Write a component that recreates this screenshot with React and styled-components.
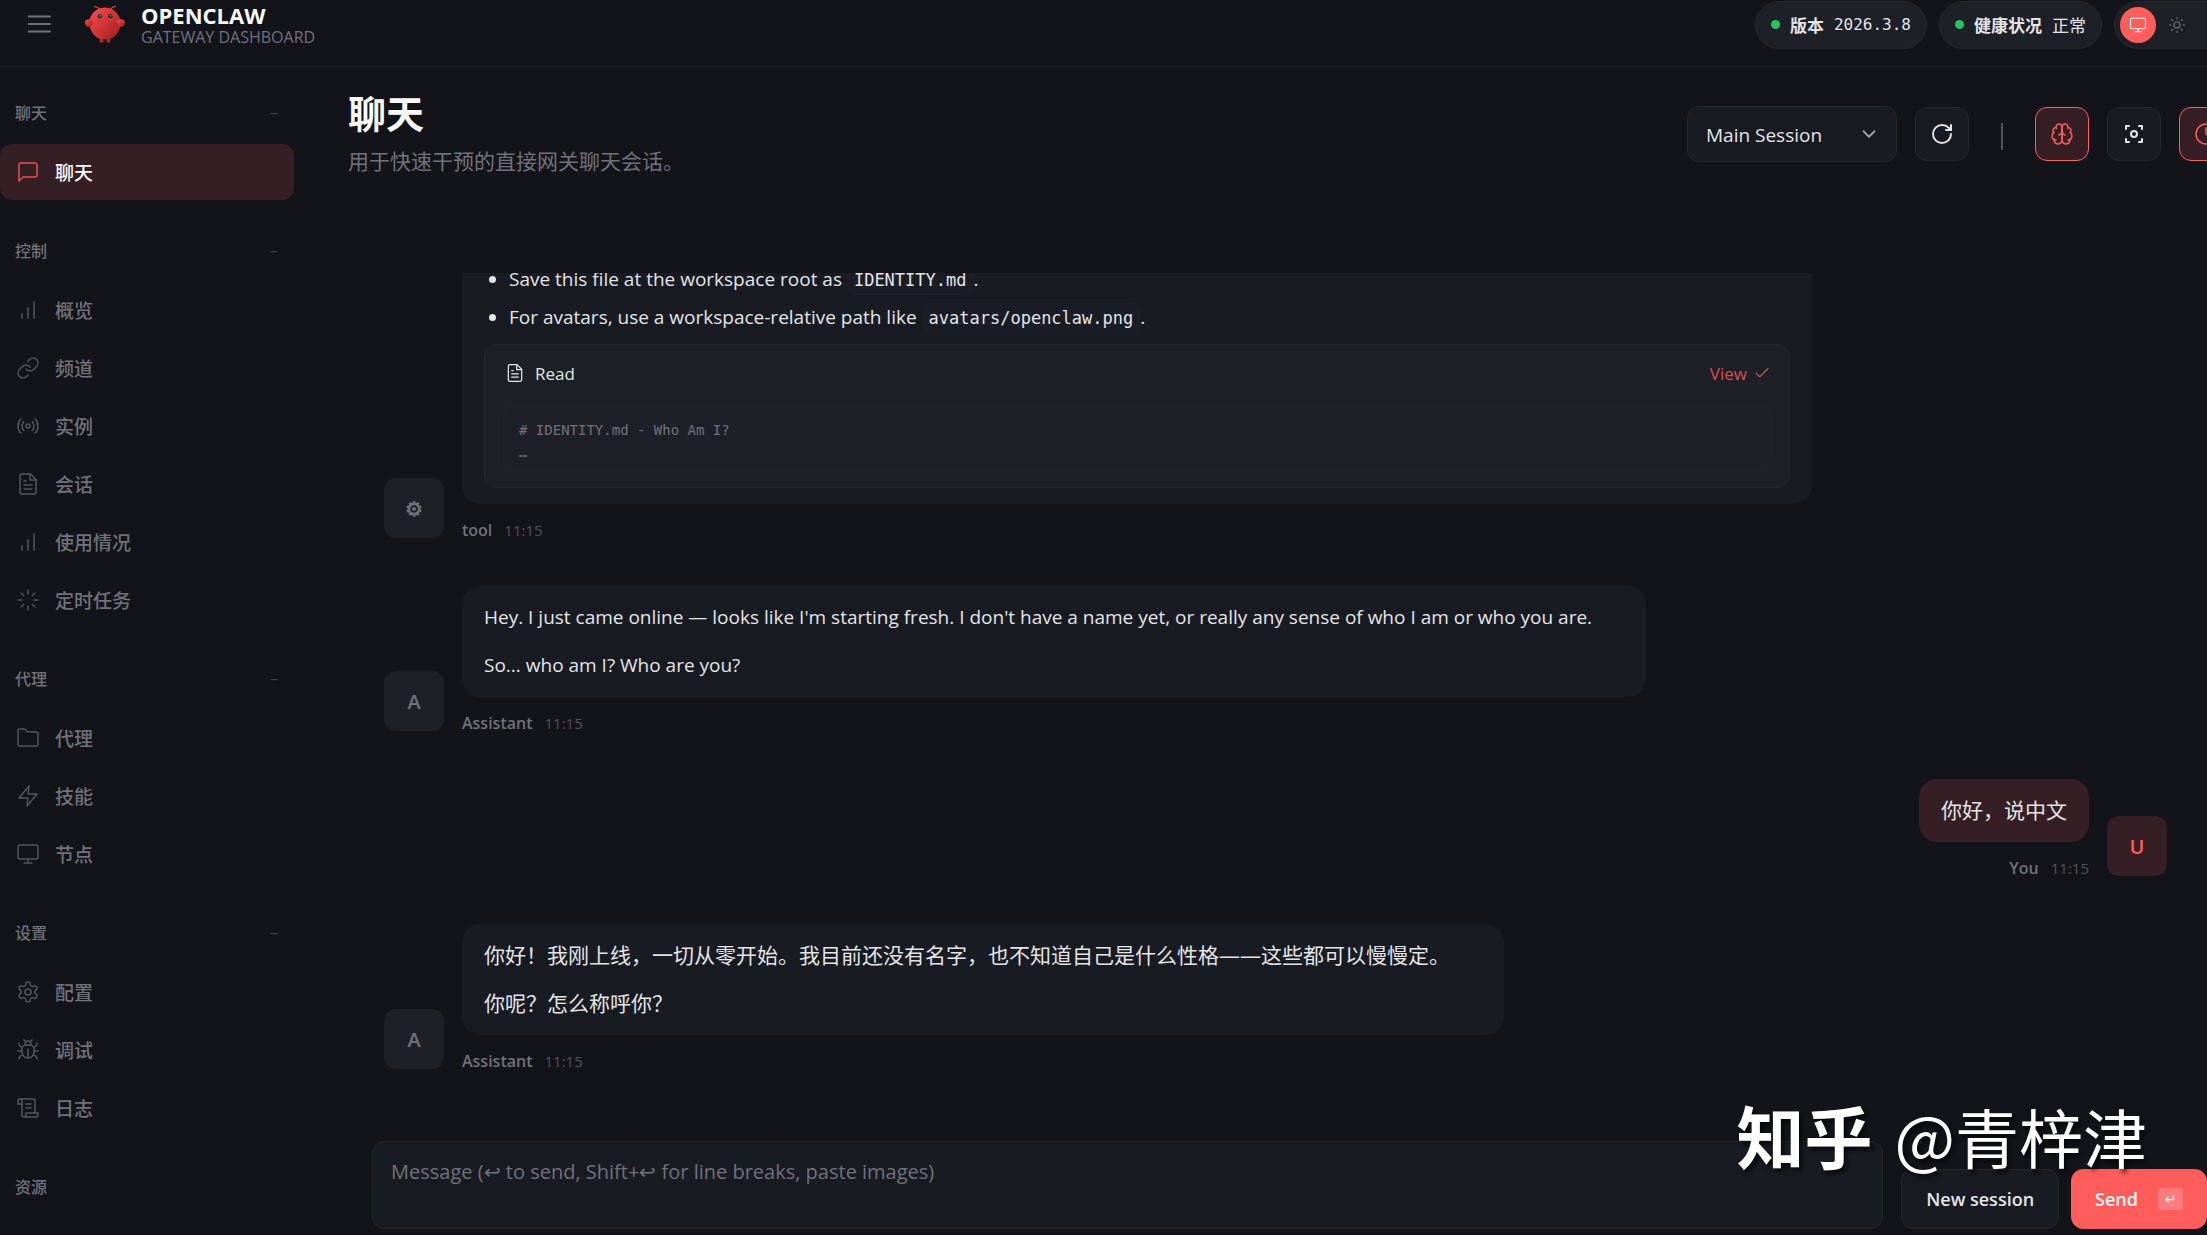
import React, { useState } from 'react';
import styled, { createGlobalStyle } from 'styled-components';

const GlobalStyle = createGlobalStyle`
    * {
        box-sizing: border-box;
    }
    body {
        margin: 0;
        background-color: #12141a;
        color: #e4e4e7;
        font-family: "Open Sans", "Noto Sans CJK SC", sans-serif;
        font-size: 20px;
        overflow: hidden;
    }
    button, select, textarea {
        font: inherit;
        color: inherit;
    }
`;

const mono = '"DejaVu Sans Mono", "Noto Sans CJK SC", monospace';

const Shell = styled.div`
    height: 100vh;
    display: flex;
    flex-direction: column;
    overflow: hidden;
`;

/* top bar */
const Topbar = styled.header`
    flex: none;
    height: 67px;
    padding: 1px 0 17px 24px;
    border-bottom: 1px solid #27272a;
    display: flex;
    align-items: center;
`;
const MenuButton = styled.button`
    width: 32px;
    height: 32px;
    padding: 0;
    border: none;
    background: none;
    color: #71717a;
    cursor: pointer;
`;
const Brand = styled.div`
    display: flex;
    align-items: center;
    gap: 15px;
    margin-left: 28px;
`;
const BrandText = styled.div`
    padding-top: 2px;
`;
const BrandName = styled.div`
    font-size: 22px;
    line-height: 22px;
    font-weight: 700;
    color: #fafafa;
`;
const BrandSub = styled.div`
    font-size: 16px;
    line-height: 22px;
    color: #71717a;
`;
/* the right-hand controls run past the window edge */
const Status = styled.div`
    display: flex;
    gap: 12px;
    margin-left: auto;
    margin-right: -33px;
`;
const Pill = styled.div`
    height: 48px;
    padding: 0 15px 2px;
    border: 1px solid #27272a;
    border-radius: 24px;
    background-color: #1e2028;
    display: flex;
    align-items: center;
    gap: 10px;
    font-size: 17px;
`;
const Dot = styled.span`
    width: 9px;
    height: 9px;
    border-radius: 50%;
    background-color: #22c55e;
`;
const PillValue = styled.span`
    font-family: ${({ $mono }) => ($mono ? mono : 'inherit')};
    font-size: ${({ $mono }) => ($mono ? '16px' : '17px')};
`;
const ThemeSwitch = styled.div`
    height: 48px;
    padding: 5px;
    border: 1px solid #27272a;
    border-radius: 24px;
    background-color: #1e2028;
    display: flex;
    gap: 3px;
`;
const ThemeButton = styled.button`
    width: 36px;
    height: 36px;
    padding: 0;
    border: none;
    border-radius: 50%;
    background-color: ${({ $active }) => ($active ? '#ff5c5c' : 'transparent')};
    color: ${({ $active }) => ($active ? '#fff' : '#71717a')};
    display: flex;
    align-items: center;
    justify-content: center;
    cursor: pointer;
`;

/* sidebar */
const Body = styled.div`
    flex: 1;
    min-height: 0;
    display: flex;
`;
const Sidebar = styled.nav`
    flex: none;
    width: 294px;
    padding-top: 25px;
    overflow: hidden;
    display: flex;
    flex-direction: column;
    gap: 30px;
`;
const Section = styled.section`
    flex: none;
    display: flex;
    flex-direction: column;
    gap: 2px;
`;
const SectionTitle = styled.button`
    height: 40px;
    margin-bottom: 10px;
    padding: 0 16px 0 15px;
    border: none;
    background: none;
    display: flex;
    align-items: center;
    justify-content: space-between;
    font-size: 16px;
    font-weight: 500;
    color: #71717a;
    cursor: pointer;
`;
const Collapse = styled.span`
    opacity: 0.5;
`;
const NavItem = styled.a`
    height: 56px;
    padding: 0 16px;
    border-radius: 12px;
    display: flex;
    align-items: center;
    gap: 15px;
    font-size: 19px;
    font-weight: 500;
    text-decoration: none;
    color: ${({ $active }) => ($active ? '#fafafa' : '#71717a')};
    background-color: ${({ $active }) => ($active ? '#361f24' : 'transparent')};

    svg {
        color: ${({ $active }) => ($active ? '#ff5c5c' : '#71717a')};
        opacity: ${({ $active }) => ($active ? 0.85 : 0.7)};
    }
`;

/* content */
const Main = styled.main`
    flex: 1;
    min-width: 0;
    padding: 22px 0 6px 54px;
    display: flex;
    flex-direction: column;
`;
const PageHead = styled.div`
    flex: none;
    height: 184px;
    display: flex;
    justify-content: space-between;
    align-items: flex-start;
`;
const Title = styled.h1`
    margin: 0;
    font-size: 38px;
    line-height: 48px;
    font-weight: 700;
    color: #fafafa;
`;
const Subtitle = styled.p`
    margin: 9px 0 0;
    font-size: 21px;
    line-height: 31px;
    color: #71717a;
`;
const Controls = styled.div`
    display: flex;
    align-items: center;
    gap: 18px;
    margin: 17px -26px 0 0;
`;
const SelectWrap = styled.label`
    display: grid;
    align-items: center;

    > * {
        grid-area: 1 / 1;
    }
    svg {
        justify-self: end;
        margin-right: 17px;
        color: #a1a1aa;
        pointer-events: none;
    }
`;
const SessionSelect = styled.select`
    width: 210px;
    height: 56px;
    padding: 2px 18px 0;
    border: 1px solid #27272a;
    border-radius: 12px;
    background-color: #181b22;
    appearance: none;
    font-size: 19px;
`;
const IconButton = styled.button`
    width: 54px;
    height: 54px;
    padding: 0;
    border: 1px solid ${({ $active }) => ($active ? '#ff5c5c' : '#27272a')};
    border-radius: 12px;
    background-color: ${({ $active }) => ($active ? '#361f24' : '#181b22')};
    color: ${({ $active }) => ($active ? '#ff5c5c' : '#e4e4e7')};
    display: flex;
    align-items: center;
    justify-content: center;
    cursor: pointer;
`;
const Divider = styled.span`
    width: 2px;
    height: 27px;
    margin: 4px 14px 0;
    background-color: #52525b;
`;

/* thread */
const Thread = styled.div`
    flex: 1;
    min-height: 0;
    padding: 0 40px 68px 36px;
    overflow: hidden;
    display: flex;
    flex-direction: column;
    justify-content: flex-end;
    gap: 44px;
`;
const Group = styled.div`
    flex: none;
    display: flex;
    flex-direction: ${({ $user }) => ($user ? 'row-reverse' : 'row')};
    align-items: flex-end;
    gap: 18px;
`;
const Avatar = styled.div`
    flex: none;
    width: 60px;
    height: 60px;
    margin-bottom: 4px;
    border-radius: 12px;
    background-color: ${({ $user }) => ($user ? '#361f24' : '#1e2028')};
    color: ${({ $user }) => ($user ? '#ff5c5c' : '#71717a')};
    display: flex;
    align-items: center;
    justify-content: center;
    font-weight: 600;
`;
const Column = styled.div`
    min-width: 0;
    display: flex;
    flex-direction: column;
    align-items: ${({ $user }) => ($user ? 'flex-end' : 'flex-start')};
`;
const Bubble = styled.div`
    padding: 16px 54px 16px 22px;
    border-radius: 18px;
    background-color: #181b22;
    display: flex;
    flex-direction: column;
    gap: 17px;
    font-size: 19px;
    line-height: 31px;

    p {
        margin: 0;
    }
    &:lang(zh) {
        font-size: 21px;
    }
`;
const UserBubble = styled(Bubble)`
    padding: 16px 22px;
    background-color: #361f24;
`;
const ToolBubble = styled(Bubble)`
    width: 1350px;
    max-width: 100%;
    padding: 16px 22px;
    gap: 11px;
`;
const Rules = styled.ul`
    margin: 0;
    padding-left: 25px;

    li + li {
        margin-top: 7px;
    }
`;
const Code = styled.code`
    padding: 4px 6px;
    border: 1px solid #1e2028;
    border-radius: 8px;
    background-color: #1a1d25;
    font-family: ${mono};
    font-size: 17px;
    line-height: 20px;
`;
const ToolCard = styled.div`
    padding: 16px 18px;
    border: 1px solid #27272a;
    border-radius: 12px;
    background-color: #1e2028;
`;
const ToolHead = styled.div`
    display: flex;
    align-items: center;
    height: 24px;
    margin-bottom: 20px;
    padding-left: 2px;
    font-size: 17px;
    gap: 10px;
`;
const ViewButton = styled.button`
    margin-left: auto;
    padding: 0;
    border: none;
    background: none;
    color: #ff5c5c;
    opacity: 0.8;
    display: flex;
    align-items: center;
    gap: 6px;
    cursor: pointer;
`;
const Output = styled.pre`
    margin: 0;
    padding: 13px 15px 7px;
    border: 1px solid #23252c;
    border-radius: 12px;
    font-family: ${mono};
    font-size: 14px;
    line-height: 22px;
    color: #71717a;
`;
const Meta = styled.div`
    margin-top: 14px;
    line-height: 24px;
    font-size: 16px;
    display: flex;
    gap: 12px;
    color: #52525b;

    strong {
        font-weight: 600;
        color: #71717a;
    }
    time {
        font-size: 15px;
    }
`;

/* composer */
const Composer = styled.form`
    flex: none;
    padding-left: 24px;
    display: flex;
    align-items: flex-end;
    gap: 12px;
`;
const MessageBox = styled.textarea`
    flex: 1;
    min-width: 0;
    height: 88px;
    margin-right: 6px;
    padding: 15px 18px;
    border: 1px solid #27272a;
    border-radius: 12px;
    background-color: #181b22;
    resize: none;
    line-height: 30px;

    &::placeholder {
        color: #71717a;
        opacity: 1;
    }
`;
const NewButton = styled.button`
    height: 60px;
    padding: 0 24px;
    border: 1px solid #27272a;
    border-radius: 12px;
    background-color: #181b22;
    font-size: 18px;
    font-weight: 600;
    cursor: pointer;
`;
const SendButton = styled(NewButton)`
    padding: 0 23px;
    border-color: #ff5c5c;
    background-color: #ff5c5c;
    color: #fff;
    display: flex;
    align-items: center;
    gap: 20px;
`;
const Key = styled.kbd`
    width: 25px;
    height: 22px;
    border-radius: 4px;
    background-color: rgba(255, 255, 255, 0.2);
    display: flex;
    align-items: center;
    justify-content: center;
    font-family: "DejaVu Sans", sans-serif;
    font-size: 14px;
    font-weight: 400;
`;

const Watermark = styled.div`
    position: absolute;
    right: 60px;
    bottom: 55px;
    display: flex;
    align-items: center;
    gap: 22px;
    font-family: "Noto Sans CJK SC", sans-serif;
    font-size: 64px;
    line-height: 90px;
    color: #fff;
    text-shadow: 3px 4px 4px rgba(0, 0, 0, 0.6);
    pointer-events: none;

    strong {
        font-size: 68px;
        font-weight: 700;
    }
`;

const icons = {
    menu: <path d="M3 6h17M3 12h17M3 18h17" />,
    chat: <path d="M21 15a2 2 0 0 1-2 2H7l-4 4V5a2 2 0 0 1 2-2h14a2 2 0 0 1 2 2z" />,
    bars: <path d="M12 20V10M18 20V4M6 20v-4" />,
    link: (
        <>
            <path d="M10 13a5 5 0 0 0 7.54.54l3-3a5 5 0 0 0-7.07-7.07l-1.72 1.71" />
            <path d="M14 11a5 5 0 0 0-7.54-.54l-3 3a5 5 0 0 0 7.07 7.07l1.71-1.71" />
        </>
    ),
    radio: (
        <>
            <circle cx="12" cy="12" r="2" />
            <path d="M16.24 7.76a6 6 0 0 1 0 8.49M7.76 16.24a6 6 0 0 1 0-8.49M19.07 4.93a10 10 0 0 1 0 14.14M4.93 19.07a10 10 0 0 1 0-14.14" />
        </>
    ),
    file: (
        <>
            <path d="M14.5 2H6a2 2 0 0 0-2 2v16a2 2 0 0 0 2 2h12a2 2 0 0 0 2-2V7.5L14.5 2z" />
            <path d="M14 2v6h6M16 13H8M16 17H8M10 9H8" />
        </>
    ),
    loader: (
        <path d="M12 2v4M12 18v4M4.93 4.93l2.83 2.83M16.24 16.24l2.83 2.83M2 12h4M18 12h4M4.93 19.07l2.83-2.83M16.24 7.76l2.83-2.83" />
    ),
    folder: (
        <path d="M4 20h16a2 2 0 0 0 2-2V8a2 2 0 0 0-2-2h-7.93a2 2 0 0 1-1.66-.9l-.82-1.2A2 2 0 0 0 7.93 3H4a2 2 0 0 0-2 2v13c0 1.1.9 2 2 2Z" />
    ),
    zap: <path d="M13 2 3 14h9l-1 8 10-12h-9l1-8z" />,
    monitor: (
        <>
            <rect x="2" y="3" width="20" height="14" rx="2" />
            <path d="M8 21h8M12 17v4" />
        </>
    ),
    settings: (
        <>
            <path d="M12.22 2h-.44a2 2 0 0 0-2 2v.18a2 2 0 0 1-1 1.73l-.43.25a2 2 0 0 1-2 0l-.15-.08a2 2 0 0 0-2.73.73l-.22.38a2 2 0 0 0 .73 2.73l.15.1a2 2 0 0 1 1 1.72v.51a2 2 0 0 1-1 1.74l-.15.09a2 2 0 0 0-.73 2.73l.22.38a2 2 0 0 0 2.73.73l.15-.08a2 2 0 0 1 2 0l.43.25a2 2 0 0 1 1 1.73V20a2 2 0 0 0 2 2h.44a2 2 0 0 0 2-2v-.18a2 2 0 0 1 1-1.73l.43-.25a2 2 0 0 1 2 0l.15.08a2 2 0 0 0 2.73-.73l.22-.39a2 2 0 0 0-.73-2.73l-.15-.08a2 2 0 0 1-1-1.74v-.5a2 2 0 0 1 1-1.74l.15-.09a2 2 0 0 0 .73-2.73l-.22-.38a2 2 0 0 0-2.73-.73l-.15.08a2 2 0 0 1-2 0l-.43-.25a2 2 0 0 1-1-1.73V4a2 2 0 0 0-2-2z" />
            <circle cx="12" cy="12" r="3" />
        </>
    ),
    bug: (
        <>
            <path d="m8 2 1.88 1.88M14.12 3.88 16 2M9 7.13v-1a3.003 3.003 0 1 1 6 0v1" />
            <path d="M12 20c-3.3 0-6-2.7-6-6v-3a4 4 0 0 1 4-4h4a4 4 0 0 1 4 4v3c0 3.3-2.7 6-6 6M12 20v-9" />
            <path d="M6.53 9C4.6 8.8 3 7.1 3 5M6 13H2M3 21c0-2.1 1.7-3.9 3.8-4M20.97 5c0 2.1-1.6 3.8-3.5 4M22 13h-4M17.2 17c2.1.1 3.8 1.9 3.8 4" />
        </>
    ),
    scroll: (
        <>
            <path d="M8 21h12a2 2 0 0 0 2-2v-2H10v2a2 2 0 1 1-4 0V5a2 2 0 1 0-4 0v3h4" />
            <path d="M19 17V5a2 2 0 0 0-2-2H4M15 8h-5M15 12h-5" />
        </>
    ),
    sun: (
        <>
            <circle cx="12" cy="12" r="4" />
            <path d="M12 2v2M12 20v2M4.93 4.93l1.41 1.41M17.66 17.66l1.41 1.41M2 12h2M20 12h2M6.34 17.66l-1.41 1.41M19.07 4.93l-1.41 1.41" />
        </>
    ),
    moon: <path d="M12 3a6 6 0 0 0 9 9 9 9 0 1 1-9-9" />,
    down: <path d="m6 9 6 6 6-6" />,
    refresh: (
        <>
            <path d="M21 12a9 9 0 1 1-9-9c2.52 0 4.93 1 6.74 2.74L21 8" />
            <path d="M21 3v5h-5" />
        </>
    ),
    brain: (
        <>
            <path d="M12 5a3 3 0 1 0-5.997.125 4 4 0 0 0-2.526 5.77 4 4 0 0 0 .556 6.588A4 4 0 1 0 12 18Z" />
            <path d="M12 5a3 3 0 1 1 5.997.125 4 4 0 0 1 2.526 5.77 4 4 0 0 1-.556 6.588A4 4 0 1 1 12 18Z" />
            <path d="M15 13a4.5 4.5 0 0 1-3-4 4.5 4.5 0 0 1-3 4M17.599 6.5a3 3 0 0 0 .399-1.375M6.003 5.125A3 3 0 0 0 6.401 6.5" />
            <path d="M3.477 10.896a4 4 0 0 1 .585-.396M19.938 10.5a4 4 0 0 1 .585.396M6 18a4 4 0 0 1-1.967-.516M19.967 17.484A4 4 0 0 1 18 18" />
        </>
    ),
    focus: (
        <>
            <path d="M4 7V4h3M20 7V4h-3M4 17v3h3M20 17v3h-3" />
            <circle cx="12" cy="12" r="3" />
        </>
    ),
    clock: (
        <>
            <circle cx="12" cy="12" r="10" />
            <path d="M12 6v6l4 2" />
        </>
    ),
    check: <path d="M20 6 9 17l-5-5" />
};

const Icon = ({ name, size = 24, stroke = 1.5 }) => (
    <svg
        width={size}
        height={size}
        viewBox="0 0 24 24"
        fill="none"
        stroke="currentColor"
        strokeWidth={stroke}
        strokeLinecap="round"
        strokeLinejoin="round"
        aria-hidden="true"
    >
        {icons[name]}
    </svg>
);

const Logo = () => (
    <svg width="42" height="42" viewBox="0 0 120 120" aria-hidden="true">
        <defs>
            <linearGradient id="shell" x1="0" y1="0" x2="1" y2="1">
                <stop offset="0" stopColor="#ff4d4d" />
                <stop offset="1" stopColor="#991b1b" />
            </linearGradient>
        </defs>
        <g fill="url(#shell)">
            <path d="M60 10C30 10 15 35 15 55s15 40 30 45v10h10v-10s5 2 10 0v10h10v-10c15-5 30-25 30-45S90 10 60 10Z" />
            <path d="M20 45C5 40 0 50 5 60s15 5 20-5c3-7 0-10-5-10Z" />
            <path d="M100 45c15-5 20 5 15 15s-15 5-20-5c-3-7 0-10 5-10Z" />
        </g>
        <path
            d="M45 15Q35 5 30 8M75 15Q85 5 90 8"
            fill="none"
            stroke="#ff4d4d"
            strokeWidth="3"
            strokeLinecap="round"
        />
        <circle cx="45" cy="35" r="6" fill="#050810" />
        <circle cx="75" cy="35" r="6" fill="#050810" />
        <circle cx="46" cy="34" r="2.5" fill="#00e5cc" />
        <circle cx="76" cy="34" r="2.5" fill="#00e5cc" />
    </svg>
);

const sections = [
    { title: '聊天', items: [['chat', '聊天']] },
    {
        title: '控制',
        items: [
            ['bars', '概览'],
            ['link', '频道'],
            ['radio', '实例'],
            ['file', '会话'],
            ['bars', '使用情况'],
            ['loader', '定时任务']
        ]
    },
    {
        title: '代理',
        items: [
            ['folder', '代理'],
            ['zap', '技能'],
            ['monitor', '节点']
        ]
    },
    {
        title: '设置',
        items: [
            ['settings', '配置'],
            ['bug', '调试'],
            ['scroll', '日志']
        ]
    },
    { title: '资源', items: [] }
];

const Message = ({ user, avatar, name, children }) => (
    <Group $user={user}>
        <Avatar $user={user}>{avatar}</Avatar>
        <Column $user={user}>
            {children}
            <Meta>
                <strong>{name}</strong>
                <time>11:15</time>
            </Meta>
        </Column>
    </Group>
);

const App = () => {
    const [page, setPage] = useState('聊天');
    const [theme, setTheme] = useState('monitor');
    const [draft, setDraft] = useState('');

    return (
        <Shell>
            <GlobalStyle />
            <Topbar>
                <MenuButton aria-label="Menu">
                    <Icon name="menu" size={30} />
                </MenuButton>
                <Brand>
                    <Logo />
                    <BrandText>
                        <BrandName>OPENCLAW</BrandName>
                        <BrandSub>GATEWAY DASHBOARD</BrandSub>
                    </BrandText>
                </Brand>
                <Status>
                    <Pill>
                        <Dot />
                        <strong>版本</strong>
                        <PillValue $mono>2026.3.8</PillValue>
                    </Pill>
                    <Pill>
                        <Dot />
                        <strong>健康状况</strong>
                        <PillValue>正常</PillValue>
                    </Pill>
                    <ThemeSwitch>
                        {['monitor', 'sun', 'moon'].map((name) => (
                            <ThemeButton
                                key={name}
                                aria-label={name}
                                $active={theme === name}
                                onClick={() => setTheme(name)}
                            >
                                <Icon name={name} size={18} />
                            </ThemeButton>
                        ))}
                    </ThemeSwitch>
                </Status>
            </Topbar>
            <Body>
                <Sidebar>
                    {sections.map(({ title, items }) => (
                        <Section key={title}>
                            <SectionTitle>
                                {title}
                                {items.length > 0 && <Collapse>–</Collapse>}
                            </SectionTitle>
                            {items.map(([icon, label]) => (
                                <NavItem
                                    key={label}
                                    href="#"
                                    $active={page === label}
                                    onClick={() => setPage(label)}
                                >
                                    <Icon name={icon} />
                                    {label}
                                </NavItem>
                            ))}
                        </Section>
                    ))}
                </Sidebar>
                <Main>
                    <PageHead>
                        <div>
                            <Title>聊天</Title>
                            <Subtitle>用于快速干预的直接网关聊天会话。</Subtitle>
                        </div>
                        <Controls>
                            <SelectWrap>
                                <SessionSelect aria-label="Session">
                                    <option>Main Session</option>
                                </SessionSelect>
                                <Icon name="down" size={22} stroke={2} />
                            </SelectWrap>
                            <IconButton aria-label="Refresh">
                                <Icon name="refresh" stroke={2} />
                            </IconButton>
                            <Divider />
                            <IconButton $active aria-label="Thinking">
                                <Icon name="brain" />
                            </IconButton>
                            <IconButton aria-label="Focus">
                                <Icon name="focus" stroke={2} />
                            </IconButton>
                            <IconButton $active aria-label="Cron sessions">
                                <Icon name="clock" />
                            </IconButton>
                        </Controls>
                    </PageHead>
                    <Thread>
                        <Message avatar="⚙" name="tool">
                            <ToolBubble>
                                <Rules>
                                    <li>
                                        Save this file at the workspace root as{' '}
                                        <Code>IDENTITY.md</Code>.
                                    </li>
                                    <li>
                                        For avatars, use a workspace-relative path like{' '}
                                        <Code>avatars/openclaw.png</Code>.
                                    </li>
                                </Rules>
                                <ToolCard>
                                    <ToolHead>
                                        <Icon name="file" size={20} />
                                        Read
                                        <ViewButton>
                                            View
                                            <Icon name="check" size={18} />
                                        </ViewButton>
                                    </ToolHead>
                                    <Output>{'# IDENTITY.md - Who Am I?\n…'}</Output>
                                </ToolCard>
                            </ToolBubble>
                        </Message>
                        <Message avatar="A" name="Assistant">
                            <Bubble>
                                <p>
                                    Hey. I just came online — looks like I'm starting fresh. I
                                    don't have a name yet, or really any sense of who I am or
                                    who you are.
                                </p>
                                <p>So... who am I? Who are you?</p>
                            </Bubble>
                        </Message>
                        <Message user avatar="U" name="You">
                            <UserBubble lang="zh">
                                <p>你好，说中文</p>
                            </UserBubble>
                        </Message>
                        <Message avatar="A" name="Assistant">
                            <Bubble lang="zh">
                                <p>
                                    你好！我刚上线，一切从零开始。我目前还没有名字，也不知道自己是什么性格——这些都可以慢慢定。
                                </p>
                                <p>你呢？怎么称呼你？</p>
                            </Bubble>
                        </Message>
                    </Thread>
                    <Composer onSubmit={(e) => e.preventDefault()}>
                        <MessageBox
                            aria-label="Message"
                            placeholder="Message (↩ to send, Shift+↩ for line breaks, paste images)"
                            value={draft}
                            onChange={(e) => setDraft(e.target.value)}
                        />
                        <NewButton type="button">New session</NewButton>
                        <SendButton type="submit">
                            Send
                            <Key>↵</Key>
                        </SendButton>
                    </Composer>
                </Main>
            </Body>
            <Watermark>
                <strong>知乎</strong>
                <span>@青梓津</span>
            </Watermark>
        </Shell>
    );
};

export default App;
